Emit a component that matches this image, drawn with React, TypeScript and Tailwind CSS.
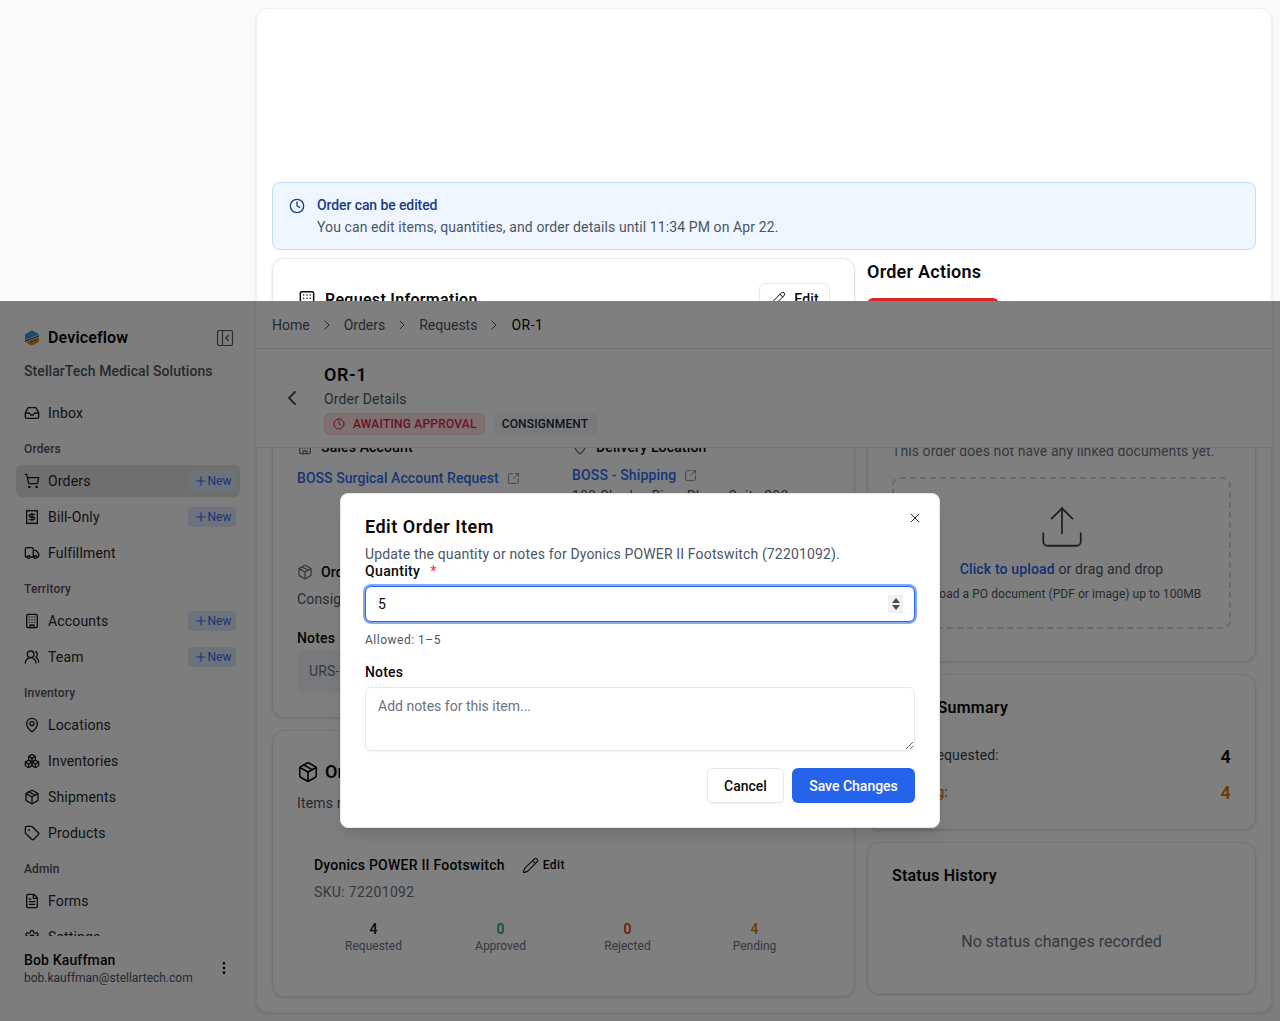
import React from "react";
import {
  Boxes,
  Building,
  ChevronLeft,
  ChevronRight,
  Clock,
  EllipsisVertical,
  FileText,
  Inbox,
  MapPin,
  Package,
  PanelLeftClose,
  Pencil,
  Plus,
  Receipt,
  Settings,
  ShoppingCart,
  SquareArrowOutUpRight,
  Tag,
  Truck,
  Upload,
  UsersRound,
  X,
} from "lucide-react";

function NavRow({ icon: Icon, label, isNew, active }: { icon: React.ElementType; label: string; isNew?: boolean; active?: boolean }) {
  return (
    <div className={`mb-1 flex h-8 items-center rounded-md pl-2 pr-1 ${active ? "bg-[#dedee0]" : ""}`}>
      <Icon className="size-4 text-[#18181b]" strokeWidth={2} />
      <span className="ml-2 flex-1 text-sm tracking-[0.17px] text-[#27272a]">{label}</span>
      {isNew && (
        <span className="flex h-5 w-12 items-center justify-center rounded bg-[#dbe4f7] pl-[1px] text-xs tracking-normal text-[#2f6bf0]">
          <Plus className="size-3.5" strokeWidth={2} />
          New
        </span>
      )}
    </div>
  );
}

function NavLabel({ label }: { label: string }) {
  return <div className="flex h-8 items-center px-2 text-xs font-medium text-[#52525b]">{label}</div>;
}

function Stat({ value, label, color }: { value: string; label: string; color: string }) {
  return (
    <div className="text-center tracking-normal">
      <div className={`text-sm leading-[18px] font-medium ${color}`}>{value}</div>
      <div className="text-xs leading-4 text-[#6b7280]">{label}</div>
    </div>
  );
}

export default function App() {
  return (
    <div className="relative flex h-[1021px] w-[1280px] overflow-hidden bg-[#fafafa] font-['Roboto',sans-serif] tracking-[0.15px] text-[#0a0a0a]">
      {/* sidebar */}
      <aside className="flex w-[256px] shrink-0 flex-col pt-[301px]">
        <div className="flex h-[96px] flex-col px-4">
          <div className="mt-[21px] flex h-8 items-center px-2">
            <svg viewBox="0 0 16 16" className="size-4">
              <path d="M8 .3 15 4.2V4.6L1 10V4.2Z" fill="#2e9bd6" />
              <path d="M15 5.2V6.6L1 12V10.6Z" fill="#2a4a5c" />
              <path d="M15 7.2V11.8L8 15.7 2 12.4Z" fill="#d9861f" />
              <path d="M13 9 5.5 11.8" stroke="#2a4a5c" strokeWidth=".7" />
            </svg>
            <span className="ml-2 flex-1 text-base font-semibold">Deviceflow</span>
            <PanelLeftClose className="mr-[-3px] size-[20px] text-[#52525b]" strokeWidth={1.4} />
          </div>
          <div className="mt-[3px] flex h-7 items-center px-2 text-sm font-medium tracking-[0.08px] text-[#4b5563]">StellarTech Medical Solutions</div>
        </div>
        <nav className="h-[539px] overflow-hidden px-4">
          <NavRow icon={Inbox} label="Inbox" />
          <NavLabel label="Orders" />
          <NavRow icon={ShoppingCart} label="Orders" isNew active />
          <NavRow icon={Receipt} label="Bill-Only" isNew />
          <NavRow icon={Truck} label="Fulfillment" />
          <NavLabel label="Territory" />
          <NavRow icon={Building} label="Accounts" isNew />
          <NavRow icon={UsersRound} label="Team" isNew />
          <NavLabel label="Inventory" />
          <NavRow icon={MapPin} label="Locations" />
          <NavRow icon={Boxes} label="Inventories" />
          <NavRow icon={Package} label="Shipments" />
          <NavRow icon={Tag} label="Products" />
          <NavLabel label="Admin" />
          <NavRow icon={FileText} label="Forms" />
          <NavRow icon={Settings} label="Settings" />
        </nav>
        <div className="flex items-center px-6 pt-[14px]">
          <div className="flex-1">
            <div className="text-sm leading-5 font-medium">Bob Kauffman</div>
            <div className="text-xs leading-4 tracking-normal text-[#4b5563]">bob.kauffman@stellartech.com</div>
          </div>
          <EllipsisVertical className="size-4" strokeWidth={2} />
        </div>
      </aside>

      {/* main card */}
      <main className="my-2 h-[1005px] w-[1016px] rounded-xl border border-[#f1f1f3] bg-white px-[15px] pt-[173px] shadow-sm">
        <div className="flex h-[68px] rounded-lg border border-[#bfdbfe] bg-[#eff6ff] pl-4 pt-[13px]">
          <Clock className="mt-[2px] size-4 text-[#1e3a8a]" strokeWidth={2} />
          <div className="ml-3 text-sm">
            <div className="leading-[18px] font-medium tracking-[-0.1px] text-[#1e3a8a]">Order can be edited</div>
            <div className="mt-[2px] leading-[22px] tracking-[0.1px] text-[#4b5563]">You can edit items, quantities, and order details until 11:34 PM on Apr 22.</div>
          </div>
        </div>

        <div className="mt-2 flex gap-3">
          {/* left column */}
          <div className="w-[583px] shrink-0">
            <div className="h-[460px] rounded-xl border border-[#e5e7eb] bg-white px-6 pt-6 shadow-sm">
              <div className="flex items-center justify-between">
                <div className="flex items-center gap-[8px] pt-[2px]">
                  <Building className="size-5" strokeWidth={1.8} />
                  <span className="text-base font-semibold tracking-[0.3px]">Request Information</span>
                </div>
                <button className="flex h-8 w-[71px] items-center justify-center gap-[8px] rounded-md border border-[#e5e7eb] text-sm font-medium">
                  <Pencil className="size-4" strokeWidth={1.5} />
                  Edit
                </button>
              </div>
              <div className="mt-[122px] grid grid-cols-[275px_1fr]">
                <div>
                  <div className="flex h-5 items-center gap-2 text-sm font-medium">
                    <Building className="size-4 text-[#6b7280]" strokeWidth={2} />
                    Sales Account
                  </div>
                  <div className="mt-[11px] flex h-5 items-center gap-2 text-sm font-medium tracking-[0.05px] text-[#2f6bf0]">
                    BOSS Surgical Account Request
                    <SquareArrowOutUpRight className="size-[13px] text-[#6b7280]" strokeWidth={1.5} />
                  </div>
                </div>
                <div>
                  <div className="flex h-5 items-center gap-2 text-sm font-medium">
                    <MapPin className="size-4 text-[#6b7280]" strokeWidth={2} />
                    Delivery Location
                  </div>
                  <div className="mt-[8px] flex h-5 items-center gap-2 text-sm font-medium text-[#2f6bf0]">
                    BOSS - Shipping
                    <SquareArrowOutUpRight className="size-[13px] text-[#6b7280]" strokeWidth={1.5} />
                  </div>
                  <div className="mt-[1px] text-sm leading-5 text-[#4b5563]">100 Charles River Plaza, Suite 200</div>
                </div>
              </div>
              <div className="mt-[56px] flex h-5 items-center gap-2 text-sm font-medium">
                <Package className="size-4 text-[#6b7280]" strokeWidth={2} />
                Order Type
              </div>
              <div className="mt-[7px] text-sm leading-5 text-[#4b5563]">Consignment</div>
              <div className="mt-[19px] text-sm leading-5 font-medium">Notes</div>
              <div className="mt-[2px] h-[43px] rounded-md bg-[#f3f4f6] px-3 pt-[11px] text-sm leading-5 text-[#6b7280]">URS-1</div>
            </div>

            <div className="mt-3 h-[267px] rounded-xl border border-[#e5e7eb] bg-white px-6 pt-[27px] shadow-sm">
              <div className="flex items-center gap-[6px]">
                <Package className="size-[22px]" strokeWidth={1.8} />
                <span className="text-lg font-semibold">Order Items</span>
              </div>
              <div className="mt-[7px] text-sm leading-5 text-[#4b5563]">Items requested for this order</div>
              <div className="mt-[42px] px-[17px]">
                <div className="flex items-center">
                  <span className="text-sm font-medium tracking-[0.22px]">Dyonics POWER II Footswitch</span>
                  <span className="ml-[17px] flex items-center gap-1 text-xs font-medium tracking-[0.4px]">
                    <Pencil className="size-[17px]" strokeWidth={1.5} />
                    Edit
                  </span>
                </div>
                <div className="mt-[7px] text-sm leading-5 tracking-[0.35px] text-[#6b7280]">SKU: 72201092</div>
                <div className="mt-[18px] ml-[-4px] grid w-[508px] grid-cols-4">
                  <Stat value="4" label="Requested" color="text-[#0a0a0a]" />
                  <Stat value="0" label="Approved" color="text-[#16a34a]" />
                  <Stat value="0" label="Rejected" color="text-[#dc2626]" />
                  <Stat value="4" label="Pending" color="text-[#d97706]" />
                </div>
              </div>
            </div>
          </div>

          {/* right column */}
          <div className="flex-1">
            <div className="mt-[2px] text-lg leading-6 font-semibold tracking-[0.25px]">Order Actions</div>
            <div className="mt-[14px] h-9 w-[132px] rounded-md bg-[#dc2626]" />
            <div className="mt-3 h-[316px] rounded-xl border border-[#e5e7eb] bg-white px-6 pt-[6px] shadow-sm">
              <div className="mt-[88px] text-sm leading-5 tracking-[0.08px] text-[#6b7280]">This order does not have any linked documents yet.</div>
              <div className="mt-[16px] flex h-[152px] flex-col items-center rounded-lg border-2 border-dashed border-[#d1d5db] pt-[23px]">
                <Upload className="size-[50px] text-[#374151]" strokeWidth={0.85} />
                <div className="mt-[7px] text-sm leading-5 text-[#4b5563]">
                  <span className="font-medium text-[#2563eb]">Click to upload</span> or drag and drop
                </div>
                <div className="mt-[5px] text-xs leading-5 tracking-[0.05px] text-[#4b5563]">Upload a PO document (PDF or image) up to 100MB</div>
              </div>
            </div>
            <div className="mt-3 h-[156px] rounded-xl border border-[#e5e7eb] bg-white px-6 pt-[23px] shadow-sm">
              <div className="text-base leading-5 font-semibold tracking-[0.25px]">Order Summary</div>
              <div className="mt-[27px] flex h-6 items-center justify-between text-sm text-[#374151]">
                <span className="mb-[4px]">Total Requested:</span>
                <span className="text-lg font-semibold text-[#0a0a0a]">4</span>
              </div>
              <div className="mt-[12px] flex h-6 items-center justify-between text-sm font-medium text-[#d97706]">
                <span className="mb-[2px]">Pending:</span>
                <span className="text-lg font-semibold">4</span>
              </div>
            </div>
            <div className="mt-3 h-[152px] rounded-xl border border-[#e5e7eb] bg-white px-6 pt-[23px] shadow-sm">
              <div className="text-base leading-5 font-semibold tracking-[0.2px]">Status History</div>
              <div className="mt-[44px] text-center text-base leading-6 tracking-normal text-[#6b7280]">No status changes recorded</div>
            </div>
          </div>
        </div>
      </main>

      {/* sticky page header over the card */}
      <div className="absolute top-[301px] left-[256px] w-[1016px] bg-white">
        <div className="flex h-12 items-center gap-[9px] border-b border-[#e5e7eb] px-4 text-sm tracking-normal text-[#4b5563]">
          <span>Home</span>
          <ChevronRight className="size-4" strokeWidth={1.5} />
          <span>Orders</span>
          <ChevronRight className="size-4" strokeWidth={1.5} />
          <span>Requests</span>
          <ChevronRight className="size-4" strokeWidth={1.5} />
          <span className="tracking-[0.5px] text-[#0a0a0a]">OR-1</span>
        </div>
        <div className="flex h-[99px] items-center border-b border-[#e5e7eb] pl-6">
          <ChevronLeft className="size-6 text-[#4b5563]" strokeWidth={2} />
          <div className="ml-5">
            <div className="mt-[-1px] text-lg leading-7 font-semibold tracking-[0.6px]">OR-1</div>
            <div className="text-sm leading-5 text-[#4b5563]">Order Details</div>
            <div className="mt-[4px] flex gap-2">
              <span className="flex h-[22px] w-[161px] items-center gap-2 rounded-md border border-[#fecaca] bg-[#fee2e2] pl-2 text-xs font-medium tracking-[0.2px] text-[#e11d48]">
                <Clock className="size-3" strokeWidth={2} />
                AWAITING APPROVAL
              </span>
              <span className="flex h-[22px] w-[104px] items-center justify-center rounded-md bg-[#f3f4f6] text-xs font-medium text-[#1f2937]">CONSIGNMENT</span>
            </div>
          </div>
        </div>
      </div>

      {/* backdrop */}
      <div className="absolute inset-x-0 top-[301px] bottom-0 bg-black/50" />

      {/* dialog */}
      <div className="absolute top-[493px] left-[340px] h-[335px] w-[600px] rounded-lg border border-[#e5e7eb] bg-white px-6 pt-[23px] shadow-lg">
        <X className="absolute top-[16px] right-[16px] size-4 text-[#27272a]" strokeWidth={1.5} />
        <h2 className="text-lg leading-[20px] font-semibold tracking-[0.5px]">Edit Order Item</h2>
        <p className="mt-[7px] text-sm leading-5 text-[#4b5563]">Update the quantity or notes for Dyonics POWER II Footswitch (72201092).</p>
        <div className="flex h-[14px] items-center text-sm leading-[14px] font-medium tracking-[0.35px]">
          Quantity
          <span className="ml-[10px] text-[#ef4444]">*</span>
        </div>
        <div className="relative mt-[8px]">
          <input
            type="number"
            defaultValue={5}
            className="h-[36px] w-full rounded-md border border-[#2563eb] bg-white px-3 text-sm ring-2 ring-[#86a9f6] outline-none [appearance:textfield] [&::-webkit-inner-spin-button]:appearance-none"
          />
          <div className="absolute top-[9px] right-[12px] flex h-[18px] w-[15px] flex-col items-center justify-center gap-[2px] bg-[#f0f0f0]">
            <svg viewBox="0 0 8 5" className="h-[5px] w-[8px]"><path d="M4 0 8 5H0Z" fill="#4b4b4b" /></svg>
            <svg viewBox="0 0 8 5" className="h-[5px] w-[8px]"><path d="M4 5 8 0H0Z" fill="#4b4b4b" /></svg>
          </div>
        </div>
        <div className="mt-[10px] text-xs leading-4 tracking-[0.5px] text-[#4b5563]">Allowed: 1–5</div>
        <div className="mt-[14px] text-sm leading-5 font-medium">Notes</div>
        <textarea
          placeholder="Add notes for this item..."
          className="mt-[5px] block h-[64px] w-full rounded-md border border-[#e5e7eb] px-3 py-[8px] text-sm tracking-normal shadow-xs outline-none placeholder:text-[#6b7280]"
        />
        <div className="mt-[17px] flex justify-end gap-2 tracking-normal">
          <button className="h-[35px] w-[77px] rounded-md border border-[#e5e7eb] bg-white text-sm font-medium shadow-xs">Cancel</button>
          <button className="h-[35px] w-[123px] rounded-md bg-[#2563eb] text-sm font-medium text-white">Save Changes</button>
        </div>
      </div>
    </div>
  );
}
